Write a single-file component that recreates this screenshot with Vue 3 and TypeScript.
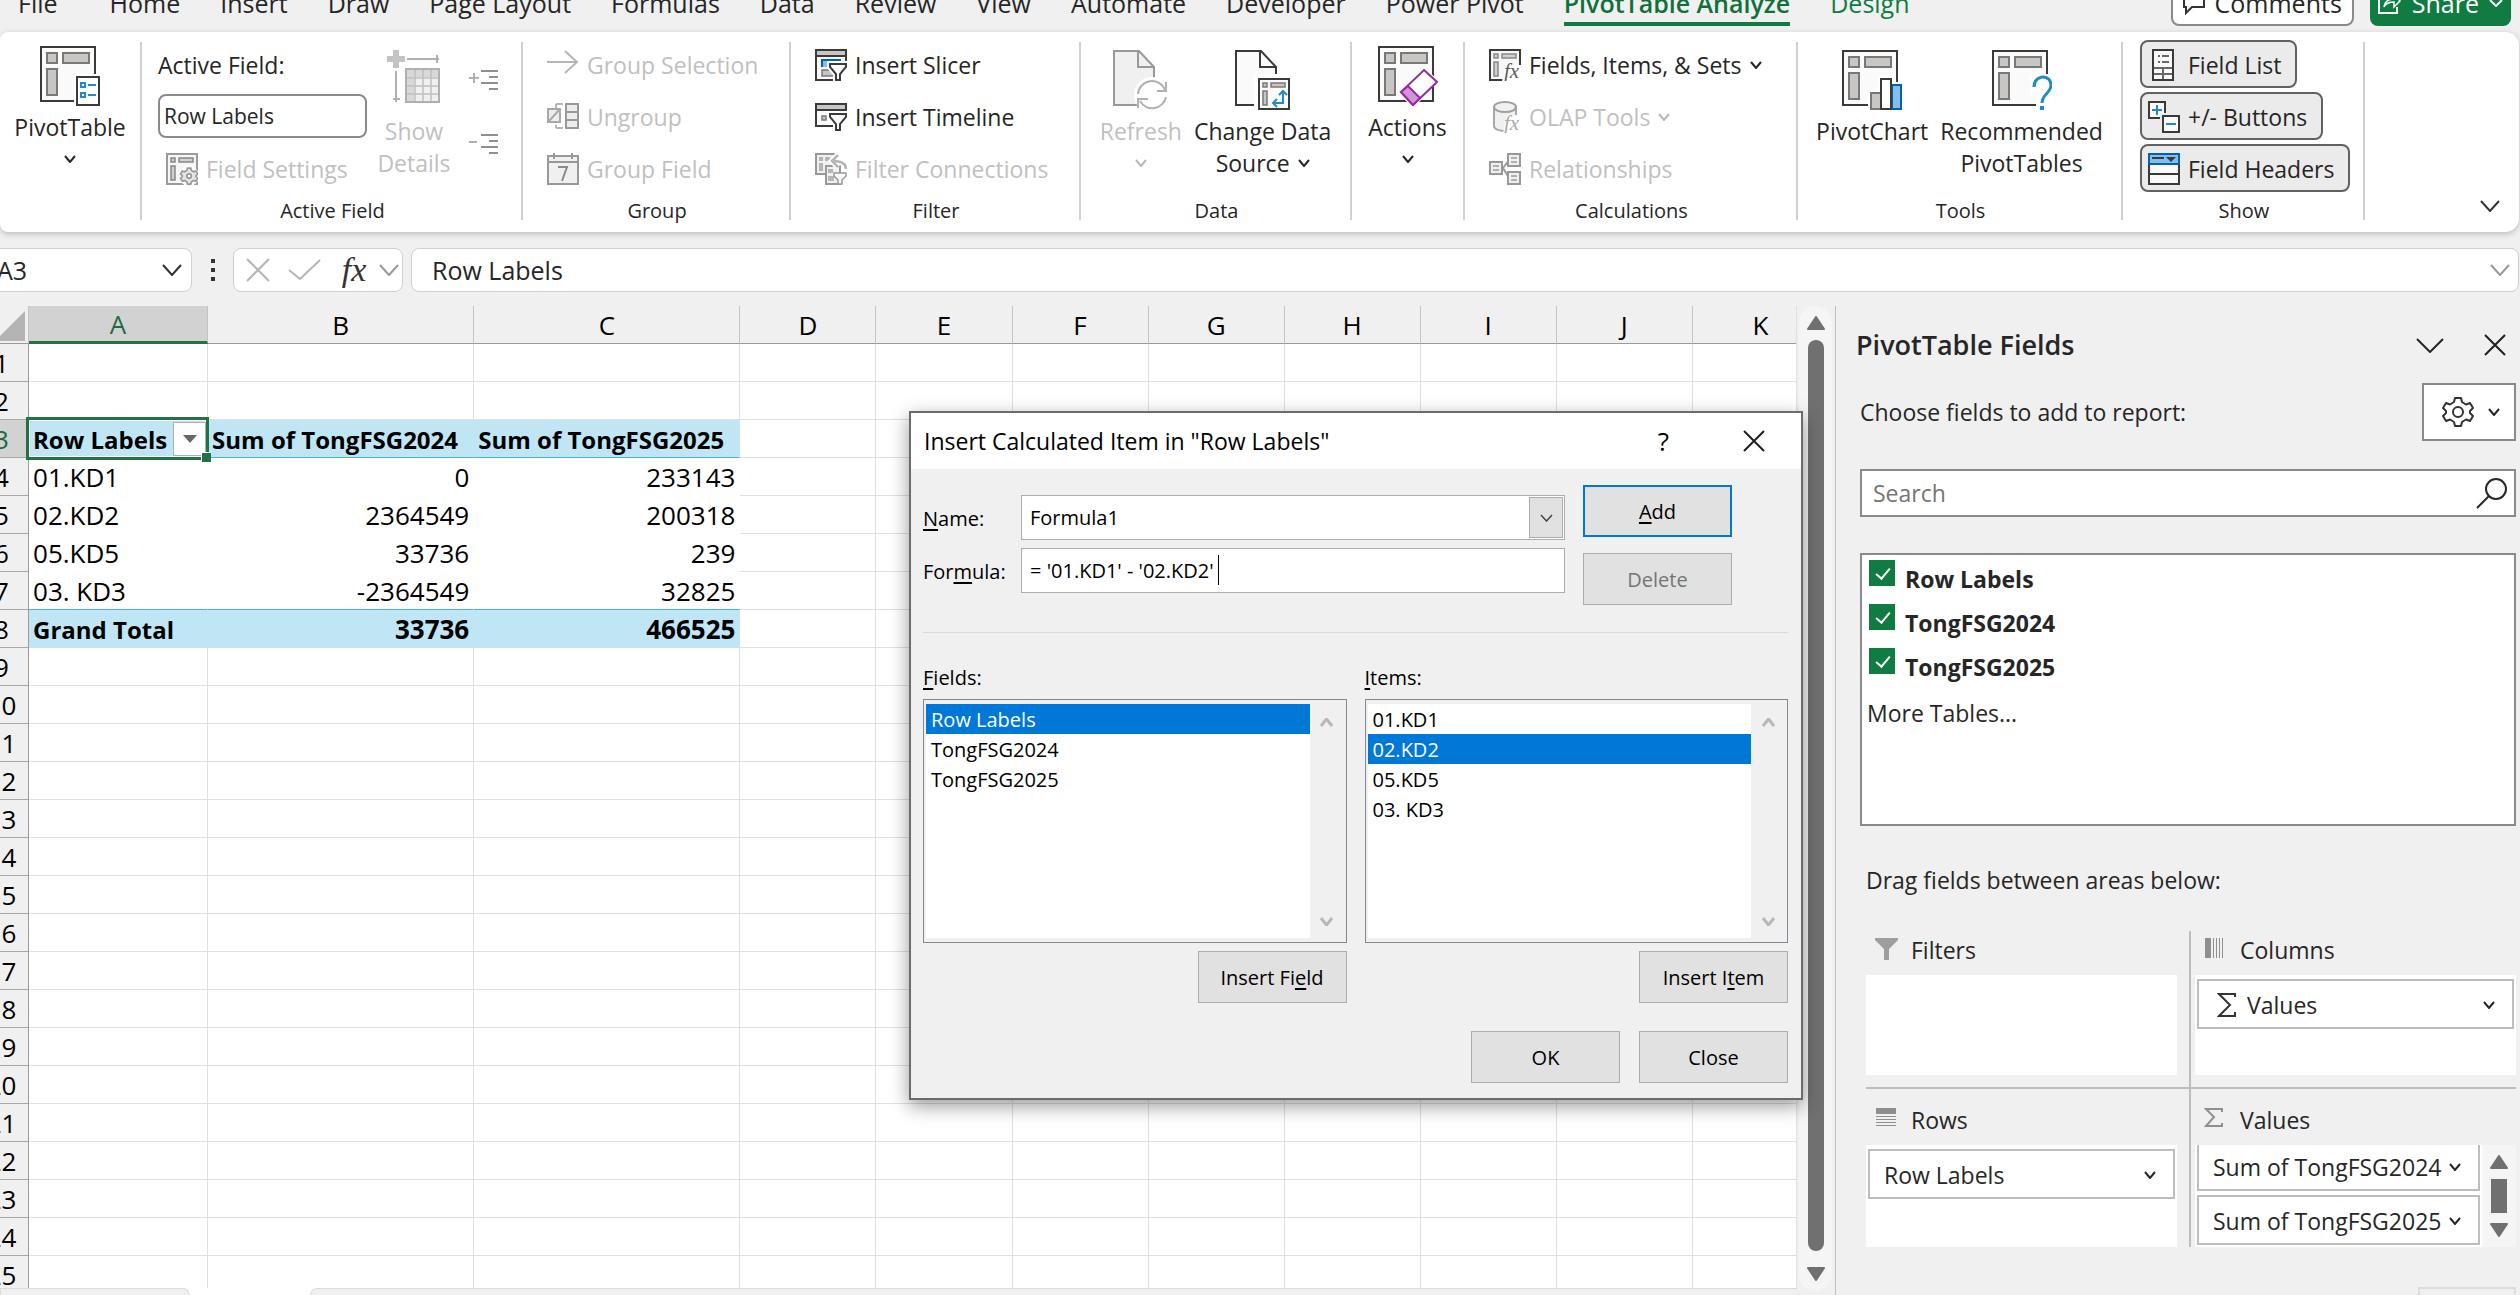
<script setup lang="ts">
import { h, ref } from 'vue'

interface Glyph { w: number; h: number; body: string }

const DARK = '#3b3a39'
const MID = '#9a9a9a'

/** Frame with a header row and a header column, shared by all pivot icons. */
function pivot(stroke: string, inner: string, fill: string, x = 0, w = 56): string {
  return `<rect x="${x + 1}" y="1" width="${w - 2}" height="54" fill="#fafafa" stroke="${stroke}" stroke-width="2"/>` +
    `<g fill="${fill}" stroke="${inner}" stroke-width="2"><rect x="${x + 7}" y="7" width="10" height="10"/>` +
    `<rect x="${x + 23}" y="7" width="${w - 30}" height="10"/><rect x="${x + 7}" y="23" width="10" height="26"/></g>`
}

function smallPivot(stroke: string): string {
  return `<rect x="1" y="1" width="30" height="30" fill="#f7f7f7" stroke="${stroke}" stroke-width="2"/>` +
    `<g fill="#d0d0d0" stroke="#8a8886" stroke-width="1.5"><rect x="5" y="5" width="4" height="4"/><rect x="13" y="5" width="14" height="4"/><rect x="5" y="13" width="4" height="14"/></g>`
}

function sheetPage(stroke: string, fill: string): string {
  return `<path d="M1 1H26L41 17V55H1Z" fill="${fill}" stroke="${stroke}" stroke-width="2"/><path d="M25 1V17H41" fill="none" stroke="${stroke}" stroke-width="2"/>`
}

function chevron(w: number, height: number, color: string, sw: number): Glyph {
  return { w, h: height, body: `<path d="M1 1L${w / 2} ${height - 1}L${w - 1} 1" fill="none" stroke="${color}" stroke-width="${sw}"/>` }
}

const FX = (c: string) => `<text x="15" y="29" font-family="Liberation Serif, serif" font-style="italic" font-size="21" fill="${c}">fx</text>`
const funnel = (x: number, y: number, c: string, stem = 9) => {
  const d = `M${x} ${y}h16v3l-6 7v${stem}h-4v-${stem}l-6-7z`
  return `<path d="${d}" fill="#fff" stroke="#fff" stroke-width="6"/><path d="${d}" fill="#fafafa" stroke="${c}" stroke-width="2"/>`
}

const GEAR = 'M13 2h6l1 4 4 2.500 4-1.500 3 5-3 3v2l3 3-3 5-4-1.500-4 2.500-1 4h-6l-1-4-4-2.500-4 1.500-3-5 3-3v-2l-3-3 3-5 4 1.500 4-2.500z'

const glyphs: Record<string, Glyph> = {
  chev: chevron(12, 8, '#262626', 2),
  chevOff: chevron(12, 8, '#b8b8b8', 2),
  chevName: chevron(20, 12, '#333', 2),
  chevGrey: chevron(20, 12, '#999', 2),
  chevPane: chevron(28, 15, '#262626', 2),
  chevThin: chevron(13, 8, '#444', 1.5),
  chevWhite: chevron(14, 8, '#fff', 2),
  chevScroll: chevron(13, 9, '#b8b8b8', 3),
  chevScrollUp: { w: 13, h: 9, body: '<path d="M1 8L6.500 1L12 8" fill="none" stroke="#b8b8b8" stroke-width="3"/>' },
  close: { w: 22, h: 22, body: '<path d="M1 1L21 21M21 1L1 21" stroke="#1f1f1f" stroke-width="2"/>' },
  closeGrey: { w: 24, h: 24, body: '<path d="M1 1L23 23M23 1L1 23" stroke="#b5b5b5" stroke-width="2"/>' },
  tickGrey: { w: 33, h: 22, body: '<path d="M1 11L12 20L32 1" fill="none" stroke="#b5b5b5" stroke-width="2"/>' },
  pivotTable: { w: 60, h: 60, body: pivot(DARK, '#7a7876', '#c8c6c4') +
    '<rect x="34" y="28" width="26" height="32" fill="#fff"/><rect x="37" y="31" width="22" height="28" fill="#fff" stroke="#3b3a39" stroke-width="2"/>' +
    '<g fill="none" stroke="#1e8bcd" stroke-width="2"><rect x="41" y="37" width="4" height="4"/><rect x="41" y="47" width="4" height="4"/><path d="M48 39h8M48 49h8"/></g>' },
  fieldSettings: { w: 32, h: 32, body: smallPivot(MID) +
    `<circle cx="23" cy="23" r="10" fill="#fff"/><g transform="translate(14 14) scale(.57)"><path d="${GEAR}" fill="#e6e6e6" stroke="${MID}" stroke-width="3"/><circle cx="16" cy="16" r="4" fill="#fff" stroke="${MID}" stroke-width="3"/></g>` },
  showDetails: { w: 54, h: 60, body:
    '<path d="M6 0h6v6h6v6h-6v6h-6v-6H0v-6h6z" fill="#c4c4c4"/><path d="M20 9h32M50 5v8M9 21v31M6 49h7" stroke="#b0b0b0" stroke-width="2"/>' +
    '<rect x="19" y="19" width="33" height="33" fill="#f0f0f0" stroke="#b0b0b0" stroke-width="2"/><path d="M20 20h31v7H20zM20 20h7v31h-7z" fill="#d8d8d8"/>' +
    '<path d="M28 20v31M36 20v31M44 20v31M20 28h31M20 36h31M20 44h31" stroke="#c0c0c0" stroke-width="1.500"/>' },
  expand: { w: 30, h: 22, body: '<path d="M0 8h10M5 3v10" stroke="#b0b0b0" stroke-width="2"/><path d="M12 1h17M20 7h9M12 13h17M20 19h9" stroke="#8f8f8f" stroke-width="2"/>' },
  collapse: { w: 30, h: 22, body: '<path d="M0 8h8" stroke="#b0b0b0" stroke-width="2"/><path d="M12 1h17M20 7h9M12 13h17M20 19h9" stroke="#8f8f8f" stroke-width="2"/>' },
  arrow: { w: 32, h: 32, body: '<path d="M0 13h30M18 2l12 11-12 11" fill="none" stroke="#b5b5b5" stroke-width="2"/>' },
  ungroup: { w: 32, h: 32, body: '<path d="M9 3h7M9 3v4M9 27h7M9 27v-3" fill="none" stroke="#b5b5b5" stroke-width="2"/><rect x="1" y="8" width="12" height="13" fill="#ededed" stroke="#a8a8a8" stroke-width="2"/><path d="M2 20L13 8" stroke="#a8a8a8" stroke-width="2"/><rect x="19" y="3" width="12" height="24" fill="#ededed" stroke="#999" stroke-width="2"/><path d="M19 11h12M19 19h12" stroke="#999" stroke-width="2"/>' },
  calendar: { w: 32, h: 32, body: '<rect x="1" y="3" width="30" height="28" fill="#f0f0f0" stroke="#999" stroke-width="2"/><path d="M1 9h30M7 0v6M25 0v6" stroke="#999" stroke-width="2"/><path d="M11 14h9l-5 14" fill="none" stroke="#8a8a8a" stroke-width="2"/>' },
  slicer: { w: 32, h: 32, body: `<rect x="1" y="1" width="30" height="30" fill="#fafafa" stroke="${DARK}" stroke-width="2"/><rect x="1" y="1" width="30" height="6" fill="#c8c6c4" stroke="${DARK}" stroke-width="2"/><path d="M6 10h20v2H8v6H6z" fill="#0063b1"/><rect x="8" y="12" width="8" height="6" fill="#83beec"/><rect x="7" y="21" width="12" height="6" fill="#c8c6c4" stroke="#7a7876" stroke-width="1.500"/><path d="M30 20h2v12h-8V20z" fill="#fff"/>` + funnel(15, 15, DARK, 6) },
  timeline: { w: 32, h: 32, body: `<rect x="1" y="3" width="30" height="22" fill="#fafafa" stroke="${DARK}" stroke-width="2"/><rect x="1" y="3" width="30" height="6" fill="#c8c6c4" stroke="${DARK}" stroke-width="2"/><rect x="7" y="15" width="4" height="4" fill="#c8c6c4" stroke="#7a7876" stroke-width="1.500"/><path d="M30 15h2v14h-8V15z" fill="#fff"/>` + funnel(15, 13, DARK, 6) },
  connections: { w: 32, h: 32, body: '<rect x="1" y="1" width="18" height="20" fill="#f0f0f0" stroke="#999" stroke-width="2"/><path d="M4 4h4v4H4zM10 4h5v4h-5zM4 10h4v8H4z" fill="#b5b5b5"/><rect x="11" y="13" width="14" height="18" fill="#f0f0f0" stroke="#999" stroke-width="2"/><path d="M13 16h5v4h-5zM13 23h6v5h-6z" fill="#b5b5b5"/><path d="M31 17c0-7-5-9-13-9M23 2l-6 6 6 6" fill="none" stroke="#fff" stroke-width="6"/><path d="M31 16c0-6-5-8-13-8M23 2l-6 6 6 6" fill="none" stroke="#b5b5b5" stroke-width="2.500"/><path d="M19 20h12v3l-4 4v4h-4v-4l-4-4z" fill="#fafafa" stroke="#999" stroke-width="1.500"/>' },
  refresh: { w: 56, h: 60, body: sheetPage('#999', '#f0f0f0') +
    '<circle cx="39" cy="45" r="18" fill="#fff"/><path d="M25 44a14 14 0 0 1 27-4M53 32v9h-9M53 47a14 14 0 0 1-26 4M25 58v-9h10" fill="none" stroke="#b0b0b0" stroke-width="2"/>' },
  changeSource: { w: 56, h: 60, body: sheetPage(DARK, '#fafafa') +
    '<rect x="19" y="24" width="36" height="36" fill="#fff"/><g transform="translate(23 28)"><rect x="1" y="1" width="30" height="30" fill="#fafafa" stroke="#3b3a39" stroke-width="2"/><g fill="#c8c6c4" stroke="#7a7876" stroke-width="1.500"><rect x="5" y="5" width="4" height="4"/><rect x="13" y="5" width="14" height="4"/><rect x="5" y="13" width="4" height="14"/></g>' +
    '<path d="M25 14v11H16M21 17l4-4 4 4M19 21l-4 4 4 4" fill="none" stroke="#1e8bcd" stroke-width="2"/></g>' },
  actions: { w: 60, h: 60, body: pivot(DARK, '#7a7876', '#c8c6c4') +
    '<path d="M45 20L60 34L36 62L20 48Z" fill="#fff"/><path d="M46 24L59 36L35 59L23 46Z" fill="#fff" stroke="#952c9e" stroke-width="2"/><path d="M30 40L42 52L35 59L23 46Z" fill="#d394dc" stroke="#952c9e" stroke-width="2"/>' },
  fieldsItems: { w: 32, h: 32, body: smallPivot(DARK) + '<path d="M17 16h15v16H13z" fill="#fff"/>' + FX('#5a5a5a') },
  olap: { w: 32, h: 32, body: '<path d="M5 6v19c0 3 5 5 11 5s11-2 11-5V6" fill="#f0f0f0" stroke="#a8a8a8" stroke-width="2"/><ellipse cx="16" cy="6" rx="11" ry="5" fill="#f0f0f0" stroke="#a0a0a0" stroke-width="2"/><path d="M18 14h14v18H14z" fill="#fff"/>' + FX('#a8a8a8') },
  relations: { w: 32, h: 32, body: '<path d="M14 15L20 7M14 15l6 10" stroke="#999" stroke-width="2"/><g fill="#f0f0f0" stroke="#999" stroke-width="2"><rect x="1" y="9" width="12" height="12"/><rect x="19" y="1" width="12" height="12"/><rect x="19" y="19" width="12" height="12"/></g><path d="M4 13h6M4 17h6M22 5h6M22 9h6M22 23h6M22 27h6" stroke="#999" stroke-width="1.500"/>' },
  pivotChart: { w: 60, h: 60, body: pivot(DARK, '#7a7876', '#c8c6c4') +
    '<path d="M26 40h10V26h16v6h8v28H26z" fill="#fff"/><rect x="29" y="43" width="10" height="16" fill="#c8c6c4" stroke="#7a7876" stroke-width="2"/><rect x="50" y="35" width="9" height="24" fill="#83beec" stroke="#0063b1" stroke-width="2"/><rect x="39" y="29" width="10" height="30" fill="#fff" stroke="#3b3a39" stroke-width="2"/>' },
  recommended: { w: 60, h: 60, body: pivot(DARK, '#7a7876', '#c8c6c4') +
    '<path d="M38 24h22v36H44V46h-6z" fill="#fff"/><path d="M42 37c0-13 17-13 17-2 0 8-9 9-9 18" fill="none" stroke="#1e8bcd" stroke-width="3"/><rect x="48" y="56" width="4" height="4" fill="#1e8bcd"/>' },
  fieldList: { w: 32, h: 32, body: `<rect x="5" y="1" width="20" height="30" fill="#fafafa" stroke="${DARK}" stroke-width="2"/><path d="M10 7h2M14 7h7M10 13h2M14 13h7" stroke="#6a6866" stroke-width="2"/><path d="M6 19h18M6 25h18M15 19v11" stroke="#6a6866" stroke-width="2"/>` },
  plusMinus: { w: 32, h: 32, body: `<rect x="1" y="1" width="16" height="16" fill="#fafafa" stroke="${DARK}" stroke-width="2"/><path d="M4 9h10M9 4v10" stroke="#1e8bcd" stroke-width="2"/><rect x="12" y="12" width="20" height="20" fill="#ebebeb"/><rect x="15" y="15" width="16" height="16" fill="#fafafa" stroke="${DARK}" stroke-width="2"/><path d="M18 23h10" stroke="#1e8bcd" stroke-width="2"/>` },
  fieldHeaders: { w: 32, h: 32, body: `<rect x="1" y="5" width="30" height="26" fill="#fafafa" stroke="${DARK}" stroke-width="2"/><path d="M1 21h30" stroke="${DARK}" stroke-width="2"/><rect x="1" y="1" width="30" height="10" fill="#83beec" stroke="#0063b1" stroke-width="2"/><path d="M4 5h12" stroke="${DARK}" stroke-width="2"/><path d="M18 4h10l-5 5z" fill="${DARK}"/>` },
  comment: { w: 24, h: 24, body: '<path d="M1 1h20v15h-12l-6 6v-6H1z" fill="none" stroke="#333" stroke-width="2"/>' },
  share: { w: 24, h: 24, body: '<path d="M10 5H1v17h18v-6" fill="none" stroke="#fff" stroke-width="2"/><path d="M6 16c1-6 5-8 10-8V3l6 7-6 6v-5c-5 0-8 1-10 5z" fill="none" stroke="#fff" stroke-width="1.500"/>' },
  gear: { w: 32, h: 32, body: `<path d="${GEAR}" fill="none" stroke="#333" stroke-width="2" stroke-linejoin="round"/><circle cx="16" cy="16" r="5" fill="none" stroke="#333" stroke-width="2"/>` },
  search: { w: 32, h: 32, body: '<circle cx="20" cy="12" r="10" fill="none" stroke="#262626" stroke-width="2"/><path d="M13 19L1 31" stroke="#262626" stroke-width="2"/>' },
  filters: { w: 24, h: 24, body: '<path d="M0 0h23v2l-9 9v11h-5V11L0 2z" fill="#9e9e9e"/>' },
  columns: { w: 24, h: 24, body: '<path d="M1 0h6v20H1zM9 0h1v20H9zM12 0h1v20h-1zM15 0h1v20h-1zM18 0h1v20h-1z" fill="#8f8f8f"/>' },
  rows: { w: 24, h: 24, body: '<path d="M1 0h20v6H1zM1 8h20v1H1zM1 11h20v1H1zM1 14h20v1H1zM1 17h20v1H1z" fill="#8f8f8f"/>' },
  sigmaGrey: { w: 24, h: 24, body: '<path d="M18 4V1H2l8 8-8 9h16v-3" fill="none" stroke="#8f8f8f" stroke-width="2"/>' },
  sigma: { w: 20, h: 26, body: '<path d="M18 5V2H2l11 11L2 24h16v-4" fill="none" stroke="#333" stroke-width="2"/>' },
  triUp: { w: 18, h: 14, body: '<path d="M9 1L17 13H1Z" fill="#707070" stroke="#707070" stroke-width="2" stroke-linejoin="round"/>' },
  triDown: { w: 18, h: 14, body: '<path d="M9 13L17 1H1Z" fill="#707070" stroke="#707070" stroke-width="2" stroke-linejoin="round"/>' },
  tri: { w: 14, h: 8, body: '<path d="M0 0h14L7 8z" fill="#666"/>' },
  corner: { w: 30, h: 30, body: '<path d="M30 0v30H0z" fill="#b4b4b4"/>' },
  dots: { w: 6, h: 22, body: '<path d="M1 0h4v4H1zM1 9h4v4H1zM1 18h4v4H1z" fill="#333"/>' },
}

const Ico = (props: { n: string }) => {
  const g = glyphs[props.n]
  return h('svg', {
    width: g.w, height: g.h, viewBox: `0 0 ${g.w} ${g.h}`, 'aria-hidden': 'true',
    style: 'display:block;flex:none', innerHTML: g.body,
  })
}
Ico.props = ['n']

const tabs = ['File', 'Home', 'Insert', 'Draw', 'Page Layout', 'Formulas', 'Data', 'Review', 'View', 'Automate', 'Developer', 'Power Pivot', 'PivotTable Analyze', 'Design']
const columns = ['A', 'B', 'C', 'D', 'E', 'F', 'G', 'H', 'I', 'J', 'K']
const pivotRows: Record<number, string[]> = {
  3: ['Row Labels', 'Sum of TongFSG2024', 'Sum of TongFSG2025'],
  4: ['01.KD1', '0', '233143'],
  5: ['02.KD2', '2364549', '200318'],
  6: ['05.KD5', '33736', '239'],
  7: ['03. KD3', '-2364549', '32825'],
  8: ['Grand Total', '33736', '466525'],
}

function cellClass(row: number, col: number) {
  const inside = col < 3 && row in pivotRows
  return {
    head: inside && row === 3,
    body: inside && row > 3 && row < 8,
    last: inside && row === 7,
    total: inside && row === 8,
    num: inside && col > 0 && row > 3,
    active: row === 3 && col === 0,
  }
}

const activeField = ref('Row Labels')
const cellName = ref('A3')
const formulaBar = ref('Row Labels')
const itemName = ref('Formula1')
const formula = ref("= '01.KD1' - '02.KD2'")
const search = ref('')
const fields = ref([
  { name: 'Row Labels', on: true },
  { name: 'TongFSG2024', on: true },
  { name: 'TongFSG2025', on: true },
])
const dialogFields = ['Row Labels', 'TongFSG2024', 'TongFSG2025']
const dialogItems = ['01.KD1', '02.KD2', '05.KD5', '03. KD3']
const chosenField = ref('Row Labels')
const chosenItem = ref('02.KD2')
</script>

<template>
  <div class="app">
    <header class="tabs">
      <nav>
        <button v-for="t in tabs" :key="t" :class="{ on: t === 'PivotTable Analyze', green: t === 'Design' }">{{ t }}</button>
      </nav>
      <div class="actions">
        <button class="comments"><Ico n="comment" />Comments</button>
        <button class="share"><Ico n="share" />Share<Ico n="chevWhite" /></button>
      </div>
    </header>

    <section class="ribbon">
      <div class="group">
        <div class="content center high">
          <button class="big"><Ico n="pivotTable" /><span>PivotTable</span><i><Ico n="chev" /></i></button>
        </div>
      </div>
      <div class="group">
        <div class="content field">
          <div class="col">
            <label class="row" for="active-field">Active Field:</label>
            <div class="entry"><input id="active-field" v-model="activeField" /></div>
            <button class="row off indent" disabled><Ico n="fieldSettings" />Field Settings</button>
          </div>
          <button class="big off details" disabled><Ico n="showDetails" /><span>Show</span><span>Details</span></button>
          <div class="levels">
            <button aria-label="Expand field"><Ico n="expand" /></button>
            <button aria-label="Collapse field"><Ico n="collapse" /></button>
          </div>
        </div>
        <div class="caption">Active Field</div>
      </div>
      <div class="group">
        <div class="content col">
          <button class="row off" disabled><Ico n="arrow" />Group Selection</button>
          <button class="row off" disabled><Ico n="ungroup" />Ungroup</button>
          <button class="row off" disabled><Ico n="calendar" />Group Field</button>
        </div>
        <div class="caption">Group</div>
      </div>
      <div class="group">
        <div class="content col">
          <button class="row"><Ico n="slicer" />Insert Slicer</button>
          <button class="row"><Ico n="timeline" />Insert Timeline</button>
          <button class="row off" disabled><Ico n="connections" />Filter Connections</button>
        </div>
        <div class="caption">Filter</div>
      </div>
      <div class="group">
        <div class="content center">
          <button class="big off" disabled><Ico n="refresh" /><span>Refresh</span><i><Ico n="chevOff" /></i></button>
          <button class="big"><Ico n="changeSource" /><span>Change Data</span><span class="inline">Source <Ico n="chev" /></span></button>
        </div>
        <div class="caption">Data</div>
      </div>
      <div class="group">
        <div class="content center high">
          <button class="big"><Ico n="actions" /><span>Actions</span><i><Ico n="chev" /></i></button>
        </div>
      </div>
      <div class="group">
        <div class="content col">
          <button class="row"><Ico n="fieldsItems" />Fields, Items, &amp; Sets<Ico n="chev" /></button>
          <button class="row off" disabled><Ico n="olap" />OLAP Tools<Ico n="chevOff" /></button>
          <button class="row off" disabled><Ico n="relations" />Relationships</button>
        </div>
        <div class="caption">Calculations</div>
      </div>
      <div class="group">
        <div class="content center">
          <button class="big"><Ico n="pivotChart" /><span>PivotChart</span></button>
          <button class="big"><Ico n="recommended" /><span>Recommended</span><span>PivotTables</span></button>
        </div>
        <div class="caption">Tools</div>
      </div>
      <div class="group">
        <div class="content col toggles">
          <button class="row pressed" aria-pressed="true"><Ico n="fieldList" />Field List</button>
          <button class="row pressed" aria-pressed="true"><Ico n="plusMinus" />+/- Buttons</button>
          <button class="row pressed" aria-pressed="true"><Ico n="fieldHeaders" />Field Headers</button>
        </div>
        <div class="caption">Show</div>
      </div>
      <button class="fold" aria-label="Collapse ribbon"><Ico n="chevName" /></button>
    </section>

    <section class="formula-row">
      <div class="box name-box">
        <input v-model="cellName" aria-label="Name box" /><Ico n="chevName" />
      </div>
      <Ico n="dots" />
      <div class="box fx-box">
        <button aria-label="Cancel"><Ico n="closeGrey" /></button>
        <button aria-label="Enter"><Ico n="tickGrey" /></button>
        <button class="fx" aria-label="Insert function">fx</button>
        <Ico n="chevGrey" />
      </div>
      <div class="box formula-box">
        <input v-model="formulaBar" aria-label="Formula bar" /><Ico n="chevGrey" />
      </div>
    </section>

    <main>
      <section class="left">
        <div class="sheet">
          <table>
            <colgroup>
              <col class="c-row" /><col class="c-a" /><col class="c-b" /><col class="c-b" />
              <col v-for="n in 8" :key="n" class="c-n" />
            </colgroup>
            <thead>
              <tr>
                <th class="corner"><Ico n="corner" /></th>
                <th v-for="c in columns" :key="c" :class="{ sel: c === 'A' }">{{ c }}</th>
              </tr>
            </thead>
            <tbody>
              <tr v-for="r in 25" :key="r">
                <th :class="{ sel: r === 3 }">{{ r }}</th>
                <td v-for="(c, i) in columns" :key="c" :class="cellClass(r, i)">
                  {{ pivotRows[r]?.[i] ?? '' }}
                  <button v-if="r === 3 && i === 0" class="drop" aria-label="Filter row labels"><Ico n="tri" /></button>
                </td>
              </tr>
            </tbody>
          </table>
        </div>
        <div class="strip"><div></div><span></span><div></div></div>
      </section>

      <div class="scroll"><div class="track"><Ico n="triUp" /><div class="thumb"></div><Ico n="triDown" /></div></div>

      <aside class="pane">
        <div class="pane-title">
          <h2>PivotTable Fields</h2>
          <button aria-label="Pane options"><Ico n="chevPane" /></button>
          <button aria-label="Close pane"><Ico n="close" /></button>
        </div>
        <div class="pane-tools">
          <span>Choose fields to add to report:</span>
          <button aria-label="Tools"><Ico n="gear" /><Ico n="chev" /></button>
        </div>
        <div class="search">
          <input v-model="search" type="text" placeholder="Search" aria-label="Search fields" /><Ico n="search" />
        </div>
        <div class="field-list">
          <label v-for="f in fields" :key="f.name"><input v-model="f.on" type="checkbox" />{{ f.name }}</label>
          <a href="#">More Tables...</a>
        </div>
        <p class="drag">Drag fields between areas below:</p>
        <div class="areas">
          <div class="area">
            <h3><Ico n="filters" />Filters</h3>
            <div class="well"></div>
          </div>
          <div class="area">
            <h3><Ico n="columns" />Columns</h3>
            <div class="well"><button class="chip"><Ico n="sigma" /><span>Values</span><Ico n="chev" /></button></div>
          </div>
          <div class="area">
            <h3><Ico n="rows" />Rows</h3>
            <div class="well"><button class="chip"><span>Row Labels</span><Ico n="chev" /></button></div>
          </div>
          <div class="area">
            <h3><Ico n="sigmaGrey" />Values</h3>
            <div class="well split">
              <div class="chips">
                <button class="chip"><span>Sum of TongFSG2024</span><Ico n="chev" /></button>
                <button class="chip"><span>Sum of TongFSG2025</span><Ico n="chev" /></button>
              </div>
              <div class="mini"><Ico n="triUp" /><div></div><Ico n="triDown" /></div>
            </div>
          </div>
        </div>
        <button class="update" aria-label="Update" disabled></button>
      </aside>
    </main>

    <div class="dialog" role="dialog" aria-labelledby="dialog-title">
      <div class="dialog-title">
        <h2 id="dialog-title">Insert Calculated Item in "Row Labels"</h2>
        <button class="help" aria-label="Help">?</button>
        <button aria-label="Close dialog"><Ico n="close" /></button>
      </div>
      <div class="dialog-body">
        <div class="form">
          <div class="inputs">
            <label for="item-name"><u>N</u>ame:</label>
            <div class="combo"><input id="item-name" v-model="itemName" /><button aria-label="Show names"><Ico n="chevThin" /></button></div>
            <label for="item-formula">For<u>m</u>ula:</label>
            <div class="combo"><input id="item-formula" v-model="formula" /><span class="caret"></span></div>
          </div>
          <div class="side">
            <button class="btn primary"><span><u>A</u>dd</span></button>
            <button class="btn" disabled>Delete</button>
          </div>
        </div>
        <hr />
        <div class="lists">
          <div>
            <div id="fields-label" class="list-label"><u>F</u>ields:</div>
            <div class="list">
              <ul role="listbox" aria-labelledby="fields-label">
                <li v-for="f in dialogFields" :key="f" role="option" :aria-selected="f === chosenField" @click="chosenField = f">{{ f }}</li>
              </ul>
              <div class="bar"><Ico n="chevScrollUp" /><Ico n="chevScroll" /></div>
            </div>
            <button class="btn"><span>Insert Fi<u>e</u>ld</span></button>
          </div>
          <div>
            <div id="items-label" class="list-label"><u>I</u>tems:</div>
            <div class="list">
              <ul role="listbox" aria-labelledby="items-label">
                <li v-for="f in dialogItems" :key="f" role="option" :aria-selected="f === chosenItem" @click="chosenItem = f">{{ f }}</li>
              </ul>
              <div class="bar"><Ico n="chevScrollUp" /><Ico n="chevScroll" /></div>
            </div>
            <button class="btn"><span>Insert I<u>t</u>em</span></button>
          </div>
        </div>
        <div class="footer">
          <button class="btn">OK</button>
          <button class="btn">Close</button>
        </div>
      </div>
    </div>
  </div>
</template>

<style>
body { background: #f0f0f0; }
</style>

<style scoped>
* { box-sizing: border-box; }
.app {
  position: relative;
  display: flex;
  flex-direction: column;
  height: 100vh;
  overflow: hidden;
  background: #f0f0f0;
  color: #262626;
  font: 23px/32px "Open Sans", "Noto Sans", sans-serif;
}
button, input {
  margin: 0;
  padding: 0;
  border: 0;
  background: none;
  color: inherit;
  font: inherit;
  white-space: nowrap;
}
input { min-width: 0; outline: 0; }
h2, h3, p, ul { margin: 0; padding: 0; font: inherit; list-style: none; }

/* Tabs */
.tabs { display: flex; flex: none; justify-content: space-between; align-items: flex-end; height: 32px; overflow: hidden; font-size: 25px; }
.tabs nav { display: flex; gap: 40px; padding-left: 18px; }
.tabs nav button { margin-bottom: 6px; padding-bottom: 3px; border-bottom: 4px solid transparent; }
.tabs nav button:first-child { margin-right: 12px; }
.tabs nav .on { border-color: #107c41; color: #0f703b; font-weight: 600; }
.tabs nav .green { color: #107c41; }
.actions { display: flex; gap: 16px; padding: 0 9px 6px 0; }
.actions button { display: flex; align-items: center; height: 46px; border-radius: 8px; }
.comments { gap: 8px; padding: 0 10px; border: 2px solid #8a8a8a !important; background: #fff; }
.share { gap: 10px; padding: 0 8px; background: #107c41; color: #fff; }

/* Ribbon */
.ribbon {
  display: flex;
  flex: none;
  height: 200px;
  margin-right: 1px;
  border-radius: 8px 14px 14px 8px;
  background: #fff;
  box-shadow: 0 2px 6px rgba(0, 0, 0, .22);
}
.group { position: relative; display: flex; flex-direction: column; flex: none; padding-top: 8px; }
.group::after { content: ""; position: absolute; top: 10px; right: 0; bottom: 12px; width: 2px; background: #d0d0d0; }
.group:nth-child(1) { width: 142px; }
.group:nth-child(2) { width: 381px; }
.group:nth-child(3) { width: 268px; }
.group:nth-child(4) { width: 290px; }
.group:nth-child(5) { width: 271px; }
.group:nth-child(6) { width: 113px; }
.group:nth-child(7) { width: 333px; }
.group:nth-child(8) { width: 325px; }
.group:nth-child(9) { width: 242px; }
.content { display: flex; height: 152px; padding-left: 24px; }
.center { justify-content: center; gap: 12px; padding: 2px 2px 0 0; }
.high { padding-top: 0; }
.center.high .big { padding-top: 6px; }
.field { padding-left: 16px; }
.col { display: flex; flex-direction: column; align-items: flex-start; gap: 4px; }
.row { display: flex; align-items: center; gap: 8px; height: 48px; padding-top: 2px; }
.field .col { width: 209px; }
.entry { display: flex; align-items: center; width: 100%; height: 48px; }
.field input { width: 100%; height: 44px; padding-left: 4px; border: 2px solid #8a8a8a; border-radius: 8px; font-size: 21px; }
.indent { margin-left: 8px; }
.off { color: #c0c0c0; }
.big { display: flex; flex-direction: column; align-items: center; justify-content: flex-start; padding-top: 8px; }
.big svg { margin-bottom: 5px; }
.big i { display: grid; place-items: center; height: 32px; }
.big i svg, .big .inline svg { margin: 0; }
.inline { display: flex; align-items: center; gap: 8px; }
.details { width: 94px; padding-top: 10px; }
.levels { display: flex; flex-direction: column; gap: 42px; padding: 30px 0 0 8px; }
.caption { margin-top: 5px; font-size: 20px; line-height: 28px; text-align: center; }
.toggles { padding-left: 17px; }
.pressed { padding: 1px 14px 0 6px; border: 2px solid #616161; border-radius: 8px; background: #ebebeb; }
.fold { margin: auto 19px 20px auto; }

/* Formula row */
.formula-row { display: flex; flex: none; align-items: center; padding: 16px 1px 14px 0; font-size: 25px; }
.box { display: flex; align-items: center; height: 44px; border: 1px solid #d0d0d0; border-radius: 8px; background: #fff; }
.name-box { width: 200px; margin: 0 18px 0 -8px; padding: 0 9px 0 4px; }
.name-box input, .formula-box input { flex: 1; }
.fx-box { gap: 18px; width: 170px; margin-left: 17px; padding-left: 12px; }
.fx-box > svg { margin-left: -8px; }
.fx { width: 30px; color: #333; font: italic 34px/32px "Liberation Serif", serif; }
.formula-box { flex: 1; margin-left: 8px; padding: 0 8px 0 20px; }

/* Sheet */
main { display: flex; flex: 1; min-height: 0; }
.left { display: flex; flex: 1; flex-direction: column; min-width: 0; }
.sheet { flex: 1; min-height: 0; overflow: hidden; border-right: 1px solid #e0e0e0; }
table { width: 1854px; margin-left: -25px; border-collapse: separate; border-spacing: 0; table-layout: fixed; color: #000; font-size: 26px; line-height: 35px; }
.c-row { width: 54px; }
.c-a { width: 179px; }
.c-b { width: 266px; }
.c-n { width: 136px; }
th, td { height: 38px; padding: 2px 0 0; white-space: nowrap; }
th { background: #f0f0f0; font-weight: 400; border-right: 1px solid #c4c4c4; border-bottom: 1px solid #9a9a9a; }
tbody th { border-right-color: #9a9a9a; border-bottom-color: #a8a8a8; }
th.sel { background: #d2d2d2; color: #1e6b41; }
thead .sel { border-bottom: 3px solid #217346; line-height: 33px; }
.corner svg { margin-left: 20px; }
td { padding: 2px 4px 0 4px; border-right: 1px solid #e0e0e0; border-bottom: 1px solid #e0e0e0; background: #fff; }
.head, .total { background: #c0e6f5; font-size: 24px; font-weight: 700; border-color: #c0e6f5; }
.head { border-bottom-color: #44b3e1; }
.body { border-color: #fff; }
.last { border-bottom-color: #44b3e1; }
.num { text-align: right; }
.num.total { font-size: 26px; }
.active { position: relative; }
.active::before { content: ""; position: absolute; inset: -3px -2px -3px -3px; border: 3px solid #217346; box-shadow: inset 0 0 0 1px #fff; }
.active::after { content: ""; position: absolute; right: -4px; bottom: -5px; width: 9px; height: 9px; border: solid #fff; border-width: 1px 0 0 1px; background: #217346; }
.drop { position: absolute; top: 2px; right: 1px; display: grid; place-items: center; width: 33px; height: 34px; border: 1px solid #b0b0b0; background: #fff; }
.strip { display: flex; flex: none; height: 7px; background: #fff; }
.strip div { border: 1px solid #dcdcdc; border-bottom: 0; background: #f0f0f0; }
.strip div:first-child { width: 190px; border-top-right-radius: 7px; }
.strip div:last-child { flex: 1; border-top-left-radius: 7px; border-right: 0; }
.strip span { width: 120px; }
.scroll { width: 38px; padding: 0 3px 4px 2px; }
.track { display: flex; flex-direction: column; align-items: center; gap: 10px; height: 100%; padding: 10px 0; border-radius: 17px; background: #f5f5f5; }
.thumb { flex: 1; width: 16px; margin-bottom: 6px; border-radius: 8px; background: #707070; }

/* Field pane */
.pane { display: flex; flex: none; flex-direction: column; width: 685px; padding: 21px 4px 0 24px; border-left: 1px solid #bdbdbd; }
.pane > * { flex: none; }
.pane-title { display: flex; align-items: center; gap: 40px; margin-left: -4px; padding-right: 10px; }
.pane-title h2 { flex: 1; font-size: 27px; line-height: 36px; font-weight: 600; }
.pane-tools { display: flex; align-items: center; justify-content: space-between; margin-top: 20px; }
.pane-tools button { display: flex; align-items: center; gap: 14px; height: 58px; padding: 0 14px 0 18px; border: 2px solid #8a8a8a; background: #fff; }
.search { display: flex; align-items: center; height: 48px; margin-top: 28px; padding: 0 6px 0 11px; border: 2px solid #8a8a8a; background: #fff; }
.search input { flex: 1; }
.search input::placeholder { color: #757575; opacity: 1; }
.field-list { height: 273px; margin-top: 36px; padding: 5px 7px; border: 2px solid #8a8a8a; background: #fff; }
.field-list label { display: flex; align-items: flex-start; gap: 10px; height: 44px; font-weight: 700; line-height: 38px; }
.field-list input { position: relative; width: 26px; height: 26px; appearance: none; background: #107c41; }
.field-list input:checked::after { content: ""; position: absolute; left: 10px; top: 5px; width: 6px; height: 12px; border: solid #fff; border-width: 0 2px 2px 0; transform: rotate(40deg); }
.field-list a { display: block; margin-left: -2px; color: inherit; line-height: 42px; text-decoration: none; }
.drag { margin: 38px 0 35px 6px; }
.areas { display: grid; grid-template-columns: 1fr 1fr; margin-left: 6px; }
.area { padding: 0 12px 12px 0; border: solid #bdbdbd; border-width: 0 2px 2px 0; }
.area:nth-child(even) { padding-left: 4px; padding-right: 0; border-right: 0; }
.area:nth-child(n+3) { padding-top: 12px; padding-bottom: 0; border-bottom: 0; }
.area h3 { display: flex; align-items: center; gap: 12px; height: 44px; padding: 0 0 6px 9px; }
.well { height: 100px; padding: 4px 2px; overflow: hidden; background: #fff; }
.chip { display: flex; align-items: center; gap: 10px; width: 100%; height: 50px; padding: 2px 17px 0 14px; border: 2px solid #bdbdbd; background: #fff; text-align: left; }
.chip svg:first-child { margin-left: 4px; }
.chip span { flex: 1; }
.split { display: flex; align-items: flex-end; height: 102px; padding: 0; }
.split .chips { display: flex; flex: 1; flex-direction: column; gap: 4px; padding: 0 2px 2px; }
.split .chip { gap: 4px; }
.mini { display: flex; flex-direction: column; align-items: center; justify-content: space-between; width: 34px; height: 100%; padding: 10px 0; background: #f5f5f5; }
.mini div { width: 16px; height: 34px; background: #707070; }
.area:nth-child(3) .well { height: 102px; }
.update { width: 98px; height: 44px; margin: 40px 0 0 auto; border: 2px solid #dcdcdc; }

/* Dialog */
.dialog { position: absolute; top: 411px; left: 909px; width: 894px; border: 2px solid #6b6b6b; background: #f0f0f0; box-shadow: 0 6px 18px rgba(0, 0, 0, .4); color: #000; font-size: 20px; line-height: 30px; }
.dialog-title { display: flex; align-items: center; gap: 74px; height: 56px; padding: 0 36px 0 13px; background: #fff; }
.dialog-title h2 { flex: 1; font-size: 23px; }
.help { font-size: 26px; }
.dialog-body { padding: 16px 13px 15px 12px; }
.form { display: flex; gap: 18px; padding-right: 56px; }
.inputs { display: grid; flex: 1; grid-template-columns: 88px 1fr; gap: 8px 10px; align-items: center; align-content: start; padding-top: 10px; }
.inputs label { padding-top: 2px; }
.combo { position: relative; display: flex; height: 45px; padding: 1px; border: 1px solid #adadad; background: #fff; }
.combo input { flex: 1; padding-left: 7px; }
.combo button { display: grid; place-items: center; width: 34px; border: 1px solid #adadad; background: #e1e1e1; }
.caret { position: absolute; top: 6px; left: 196px; width: 1px; height: 30px; background: #000; }
.side { display: flex; flex-direction: column; gap: 16px; }
.btn { width: 149px; height: 52px; padding-top: 2px; border: 1px solid #adadad; background: #e1e1e1; }
.btn:disabled { color: #757575; }
.primary { border: 2px solid #0078d7; }
u { text-decoration-thickness: 2px; text-underline-offset: 3px; }
hr { height: 1px; margin: 27px 0 30px; border: 0; background: #dadada; }
.lists { display: grid; grid-template-columns: 1fr 1fr; gap: 18px; }
.lists > div { display: flex; flex-direction: column; align-items: flex-end; }
.list-label { align-self: stretch; margin-bottom: 6px; }
.list { display: flex; align-self: stretch; height: 244px; margin-bottom: 8px; padding: 4px 2px; border: 1px solid #828790; background: #f0f0f0; }
.list ul { flex: 1; background: #fff; }
.list li { padding: 2px 0 0 5px; line-height: 28px; }
.list li[aria-selected="true"] { background: #0078d7; color: #fff; }
.bar { display: flex; flex-direction: column; align-items: center; justify-content: space-between; width: 34px; padding: 14px 0 12px; }
.footer { display: flex; justify-content: flex-end; gap: 19px; margin-top: 28px; }
</style>
